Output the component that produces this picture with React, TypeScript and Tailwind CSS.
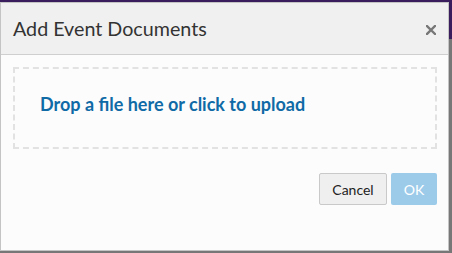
import React from 'react';

export default function App() {
  return (
    <div className="relative w-[452px] h-[253px] overflow-hidden bg-[#777777]" style={{ fontFamily: 'Lato, "Noto Sans", sans-serif' }}>
      <div className="h-[39px] bg-[#3a1d5c]" />

      <div className="absolute left-0 top-[2px] w-[449px] h-[249px] flex flex-col border border-[#c4c4c4] bg-[#fcfcfc]">
        <div className="flex items-center justify-between h-[52px] shrink-0 bg-[#f0f0f0] border-b border-[#cfcfcf] pl-[12px] pr-[10px]">
          <h2 className="text-[19.7px] text-[#333333] leading-none">Add Event Documents</h2>
          <button className="text-[#777777] w-[14px] h-[14px] flex items-center justify-center mt-[2px]">
            <svg width="10" height="10" viewBox="0 0 10 10">
              <path d="M1 1L9 9M9 1L1 9" stroke="currentColor" strokeWidth="2.4" strokeLinecap="square" />
            </svg>
          </button>
        </div>

        <div className="flex-1 flex flex-col pl-[12px] pr-[11px] pt-[12px]">
          <div className="h-[82px] border-2 border-dashed border-[#e2e2e2] flex items-start pl-[25px] pt-[26px]">
            <span className="text-[18px] leading-none font-bold text-[#0f6aa6]">Drop a file here or click to upload</span>
          </div>

          <div className="flex justify-end gap-[4px] mt-[24px]">
            <button className="h-[32px] w-[68px] rounded-[2px] border border-[#c9c9c9] bg-[#efefef] text-[14px] text-[#222222]">
              Cancel
            </button>
            <button className="h-[32px] w-[46px] rounded-[2px] bg-[#9ccbea] text-[14px] text-white">
              OK
            </button>
          </div>
        </div>
      </div>
    </div>
  );
}
